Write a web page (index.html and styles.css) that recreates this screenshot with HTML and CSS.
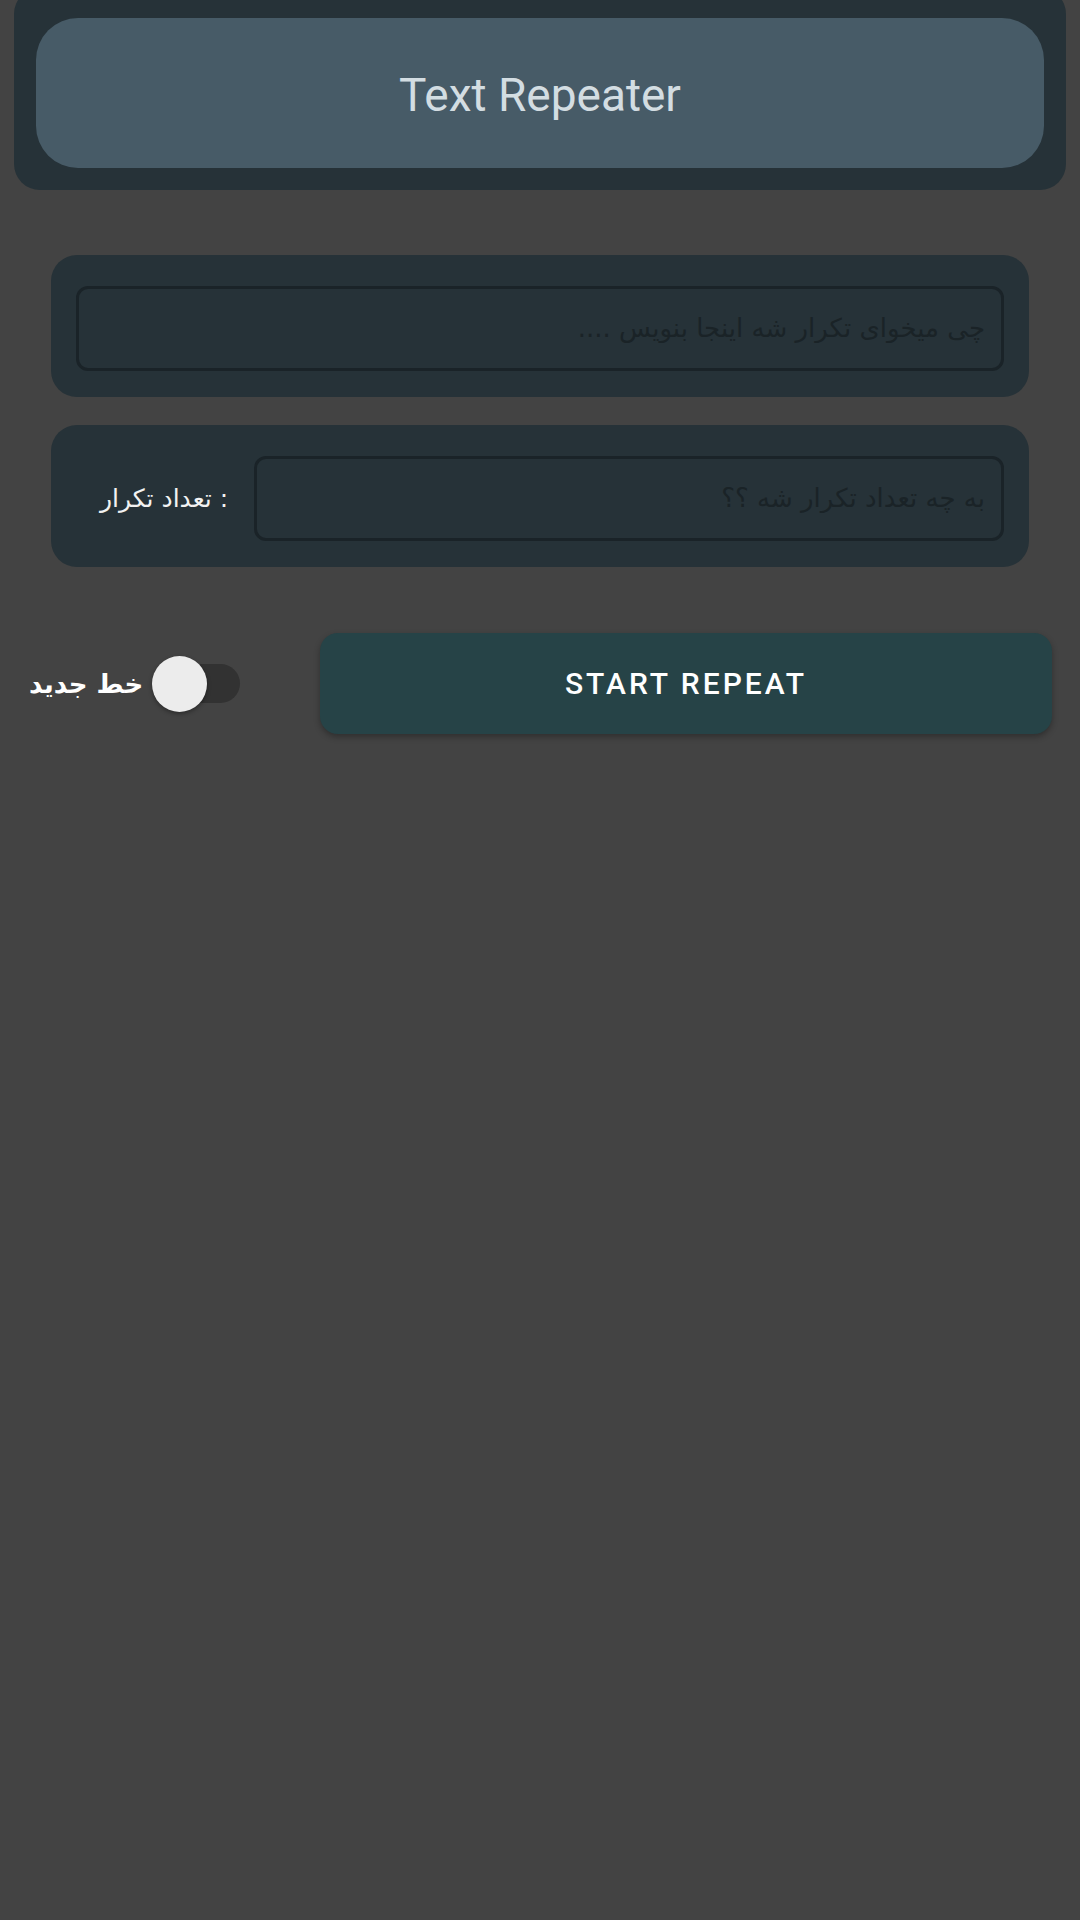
FILE: index.html
```html
<!DOCTYPE html>
<html lang="fa">
<head>
<meta charset="utf-8">
<title>Text Repeater</title>
<link rel="stylesheet" href="styles.css">
</head>
<body>
<header class="appbar">
  <div class="appbar-title">Text Repeater</div>
</header>
<main class="content">
  <section class="card">
    <input class="field" type="text" dir="rtl" placeholder="چی میخوای تکرار شه اینجا بنویس ....">
  </section>
  <section class="card card-row">
    <label class="field-label" dir="ltr">تعداد تکرار :</label>
    <input class="field field-grow" type="text" dir="rtl" placeholder="به چه تعداد تکرار شه ؟؟">
  </section>
  <div class="actions">
    <div class="toggle">
      <span class="toggle-label" dir="rtl">خط جدید</span>
      <span class="switch"><span class="switch-track"></span><span class="switch-thumb"></span></span>
    </div>
    <button class="start-btn" type="button">START REPEAT</button>
  </div>
</main>
</body>
</html>
```
FILE: styles.css
```css
html, body {
  margin: 0;
  padding: 0;
}
body {
  width: 1080px;
  height: 1920px;
  overflow: hidden;
  background: #434343;
  font-family: Roboto, "DejaVu Sans", sans-serif;
}
.appbar {
  margin: -12px 14px 0;
  padding: 30px 22px 22px;
  background: #263238;
  border-radius: 26px;
}
.appbar-title {
  height: 150px;
  box-sizing: border-box;
  padding-top: 4px;
  border-radius: 42px;
  background: #475b67;
  color: #d3dde2;
  font-size: 46px;
  display: flex;
  align-items: center;
  justify-content: center;
}
.content {
  padding: 65px 0 0;
}
.card {
  margin: 0 51px 28px;
  height: 142px;
  box-sizing: border-box;
  padding: 4px 25px 0;
  background: #263238;
  border-radius: 26px;
  display: flex;
  align-items: center;
}
.card-row {
  gap: 26px;
  padding-left: 49px;
}
.field {
  flex: 1;
  height: 85px;
  box-sizing: border-box;
  margin: 0;
  border: 3px solid #1a2328;
  border-radius: 12px;
  background: #263238;
  padding: 0 16px;
  font-family: "DejaVu Sans", sans-serif;
  font-size: 26px;
  color: #cfd8dc;
  outline: none;
  text-align: right;
}
.field::placeholder {
  color: #1a2327;
}
.field-label {
  color: #f2f2f2;
  font-family: "DejaVu Sans", sans-serif;
  font-size: 25px;
  white-space: nowrap;
}
.actions {
  margin-top: 66px;
  padding: 0 28px 0 29px;
  display: flex;
  align-items: center;
}
.toggle {
  display: flex;
  align-items: center;
  gap: 4px;
}
.toggle-label {
  color: #ffffff;
  font-family: "DejaVu Sans", sans-serif;
  font-size: 26px;
  font-weight: bold;
}
.switch {
  position: relative;
  width: 93px;
  height: 56px;
  display: flex;
  align-items: center;
  justify-content: flex-end;
}
.switch-track {
  width: 80px;
  height: 39px;
  border-radius: 20px;
  background: #323232;
}
.switch-thumb {
  position: absolute;
  left: 5px;
  top: 0;
  width: 55px;
  height: 56px;
  border-radius: 50%;
  background: #ececec;
  box-shadow: 0 2px 4px rgba(0, 0, 0, 0.35);
}
.start-btn {
  margin-left: auto;
  width: 732px;
  height: 101px;
  border: none;
  border-radius: 18px;
  background: #264347;
  color: #ffffff;
  font-family: Roboto, sans-serif;
  font-weight: 500;
  font-size: 30px;
  letter-spacing: 3px;
  box-shadow: 0 3px 6px rgba(0, 0, 0, 0.3);
}
```
